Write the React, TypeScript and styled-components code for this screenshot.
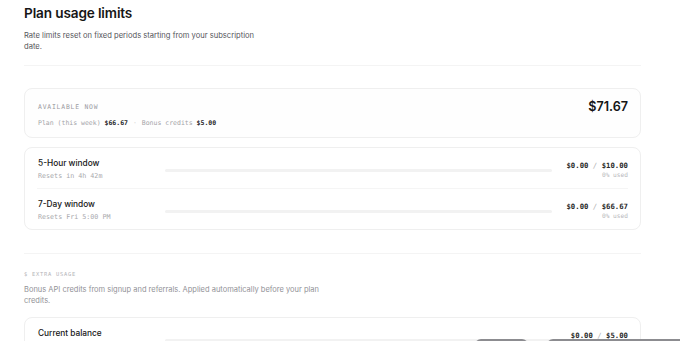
import React from "react";
import styled, { createGlobalStyle } from "styled-components";

const Global = createGlobalStyle`
  * { box-sizing: border-box; }
  html, body { margin: 0; padding: 0; background: #ffffff; }
  body { font-family: Inter, "Noto Sans", sans-serif; color: #1a1a1a; }
`;

const Page = styled.div`
  padding: 4px 39px 40px 24px;
  display: flex;
  flex-direction: column;
`;

const Title = styled.h1`
  margin: 0;
  font-size: 13.6px;
  line-height: 18px;
  font-weight: 600;
  letter-spacing: -0.01em;
  color: #161616;
`;

const Subtitle = styled.p`
  margin: 7.5px 0 0;
  max-width: 250px;
  font-size: 7.6px;
  line-height: 11px;
  color: #55555b;
`;

const Divider = styled.div<{ $top: number; $bottom: number }>`
  height: 1px;
  background: #f4f4f4;
  margin-top: ${(p) => p.$top}px;
  margin-bottom: ${(p) => p.$bottom}px;
`;

const Card = styled.div`
  border: 1px solid #efefef;
  border-radius: 8px;
  background: #ffffff;
  display: flex;
  flex-direction: column;
`;

const AvailableCard = styled(Card)`
  padding: 10px 12px 9px 13px;
  background: #fefefe;
`;

const TopRow = styled.div`
  display: flex;
  align-items: center;
  justify-content: space-between;
`;

const Mono = styled.span`
  font-family: "DejaVu Sans Mono", "Liberation Mono", monospace;
`;

const Label = styled(Mono)`
  font-size: 6.4px;
  line-height: 9px;
  letter-spacing: 0.8px;
  color: #9a9a9e;
  text-transform: uppercase;
`;

const Amount = styled.span`
  font-size: 12.6px;
  line-height: 16px;
  font-weight: 600;
  color: #161616;
`;

const Detail = styled(Mono)`
  margin-top: 4px;
  font-size: 6.5px;
  line-height: 9px;
  color: #a4a4a8;
`;

const Strong = styled.b`
  color: #2a2a2a;
  font-weight: 700;
`;

const Dot = styled.span`
  color: #cfcfcf;
  margin: 0 1px;
`;

const Gap = styled.div<{ $h: number }>`
  height: ${(p) => p.$h}px;
`;

const Row = styled.div`
  display: flex;
  align-items: center;
  padding: 10px 12px 7px 13px;
  gap: 12px;
`;

const RowDivider = styled.div`
  height: 1px;
  background: #f5f5f5;
  margin: 0 12px;
`;

const RowLeft = styled.div`
  width: 115px;
  display: flex;
  flex-direction: column;
  gap: 3px;
`;

const RowTitle = styled.span`
  font-size: 8.3px;
  line-height: 11px;
  font-weight: 500;
  color: #161616;
`;

const RowSub = styled(Mono)`
  font-size: 6.7px;
  line-height: 9px;
  color: #a8a8ac;
`;

const Bar = styled.div`
  flex: 1;
  height: 3px;
  border-radius: 2px;
  background: #f2f2f2;
  margin-top: 2px;
  overflow: hidden;
`;

const Fill = styled.div`
  height: 100%;
  background: #1a1a1a;
`;

const RowRight = styled.div`
  width: 64px;
  display: flex;
  flex-direction: column;
  align-items: flex-end;
`;

const Usage = styled(Mono)`
  font-size: 7.3px;
  line-height: 10px;
  font-weight: 700;
  color: #2a2a2a;
  white-space: nowrap;
`;

const Slash = styled.span`
  font-weight: 400;
  color: #b0b0b0;
`;

const Pct = styled(Mono)`
  font-size: 6.2px;
  line-height: 8px;
  color: #b8b8bc;
`;

const SectionLabel = styled(Mono)`
  margin-top: 1px;
  font-size: 5.4px;
  line-height: 8px;
  letter-spacing: 0.14em;
  color: #b4b4b8;
  text-transform: uppercase;
`;

const SectionDesc = styled.p`
  margin: 5.5px 0 0;
  max-width: 300px;
  font-size: 7.5px;
  line-height: 11px;
  color: #929297;
`;

const FooterBar = styled.div`
  position: fixed;
  top: 339px;
  left: 475px;
  display: flex;
  gap: 19px;
`;

const FooterButton = styled.div<{ $w: number }>`
  width: ${(p) => p.$w}px;
  height: 24px;
  border-radius: 6px;
  background: #8c8c90;
`;

type Win = { title: string; sub: string; used: string; limit: string; pct: number };

const windows: Win[] = [
  { title: "5-Hour window", sub: "Resets in 4h 42m", used: "$0.00", limit: "$10.00", pct: 0 },
  { title: "7-Day window", sub: "Resets Fri 5:00 PM", used: "$0.00", limit: "$66.67", pct: 0 },
];

function UsageRow({ w }: { w: Win }) {
  return (
    <Row>
      <RowLeft>
        <RowTitle>{w.title}</RowTitle>
        <RowSub>{w.sub}</RowSub>
      </RowLeft>
      <Bar>
        <Fill style={{ width: `${w.pct}%` }} />
      </Bar>
      <RowRight>
        <Usage>
          {w.used} <Slash>/</Slash> {w.limit}
        </Usage>
        <Pct>{w.pct}% used</Pct>
      </RowRight>
    </Row>
  );
}

export default function App() {
  return (
    <>
      <Global />
      <Page>
        <Title>Plan usage limits</Title>
        <Subtitle>
          Rate limits reset on fixed periods starting from your subscription date.
        </Subtitle>
        <Divider $top={13.5} $bottom={22} />
        <AvailableCard>
          <TopRow>
            <Label>Available now</Label>
            <Amount>$71.67</Amount>
          </TopRow>
          <Detail>
            Plan (this week) <Strong>$66.67</Strong>
            <Dot> · </Dot>Bonus credits <Strong>$5.00</Strong>
          </Detail>
        </AvailableCard>
        <Gap $h={9} />
        <Card>
          <UsageRow w={windows[0]} />
          <RowDivider />
          <UsageRow w={windows[1]} />
        </Card>
        <Divider $top={23} $bottom={15} />
        <SectionLabel>$ Extra usage</SectionLabel>
        <SectionDesc>
          Bonus API credits from signup and referrals. Applied automatically before your plan credits.
        </SectionDesc>
        <Gap $h={11.5} />
        <Card>
          <UsageRow
            w={{ title: "Current balance", sub: "Resets never", used: "$0.00", limit: "$5.00", pct: 0 }}
          />
        </Card>
      </Page>
      <FooterBar>
        <FooterButton $w={53} />
        <FooterButton $w={140} />
      </FooterBar>
    </>
  );
}
